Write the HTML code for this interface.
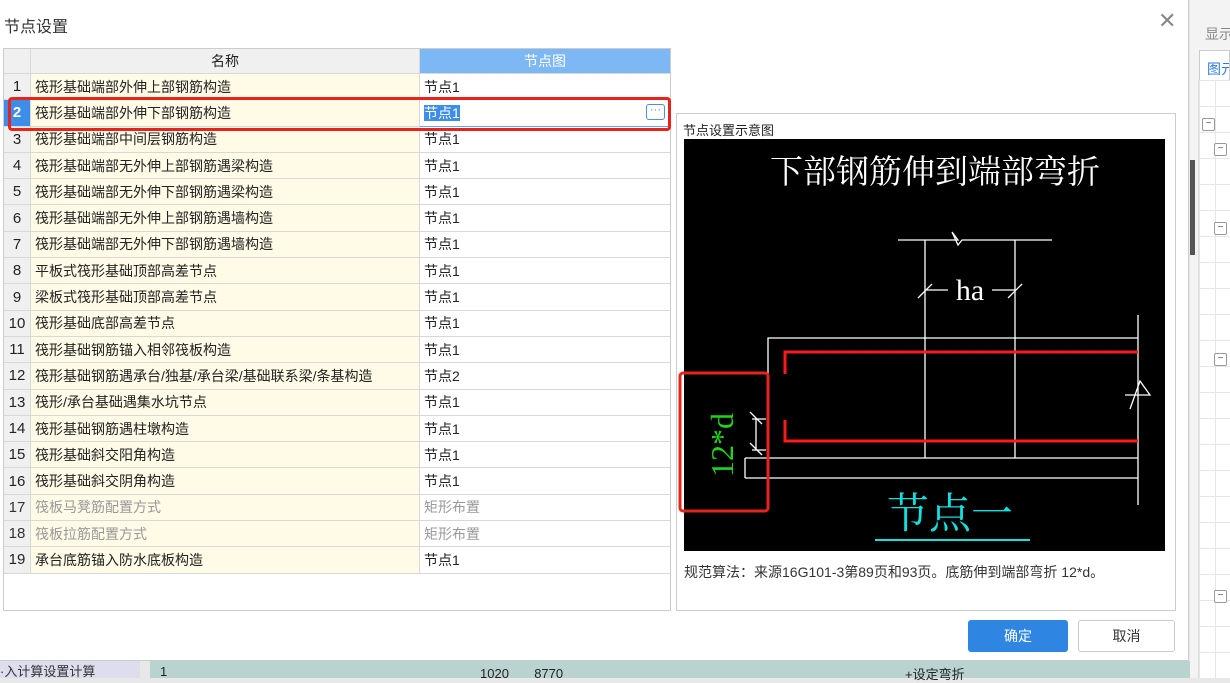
<!DOCTYPE html>
<html><head><meta charset="utf-8"><style>
*{margin:0;padding:0;box-sizing:border-box}
body{width:1230px;height:678px;overflow:hidden;position:relative;background:#e8e8e8;font-family:"Liberation Sans","Noto Sans CJK SC",sans-serif;font-size:14px;color:#222}
.abs{position:absolute}
#dlg{left:0;top:0;width:1189px;height:661px;background:#fff;border-right:1px solid #ccc;border-bottom:1px solid #ccc}
table{border-collapse:collapse;position:absolute;left:3px;top:48px;table-layout:fixed}
td,th{border:1px solid #d8d8d8;height:26.3px;font-weight:normal;white-space:nowrap;overflow:hidden;padding:0 4px}
th{height:25px;background:#f0f0f0;text-align:center;font-size:14px}
th.b{background:#7db8f5;color:#fff}
td.n{background:#f0f0f0;text-align:center;padding:0;font-size:15px}
td.y{background:#fffbe6}
tr.g td{color:#999}
tr.g td.n{color:#333}
.clip{overflow:hidden;white-space:nowrap}
.mb{position:absolute;width:13px;height:13px;border:1px solid #999;border-radius:2px;background:#fff;font-size:10px;line-height:10px;text-align:center;color:#555}
</style></head><body>
<div class="abs" style="left:1190px;top:0;width:40px;height:678px;background:#f3f3f3"></div>
<div class="abs" style="left:1198px;top:80px;width:32px;height:598px;background:#fff;border-left:1px solid #ddd;background-image:linear-gradient(#e6e6e6 1px,transparent 1px),linear-gradient(90deg,#e6e6e6 1px,transparent 1px);background-size:100% 26px,16px 100%"></div>
<div class="abs clip" style="left:1205px;top:24px;width:25px;font-size:14px;color:#888">显示</div>
<div class="abs clip" style="left:1199px;top:50px;width:31px;height:30px;border:1px solid #ccc;border-bottom:none;background:#fff;font-size:14px;color:#2a7ae2;padding:8px 0 0 7px">图元</div>
<div class="mb" style="left:1202px;top:118px">−</div>
<div class="mb" style="left:1214px;top:143px">−</div>
<div class="mb" style="left:1214px;top:222px">−</div>
<div class="mb" style="left:1214px;top:353px">−</div>
<div class="mb" style="left:1214px;top:590px">−</div>
<div class="abs" style="left:1190px;top:160px;width:5px;height:95px;background:#555"></div>
<div class="abs clip" style="left:0;top:661px;width:140px;height:17px;background:#dde;color:#333;font-size:13px">·入计算设置计算</div>
<div class="abs" style="left:150px;top:661px;width:1040px;height:17px;background:#b8d3d0"></div>
<div class="abs" style="left:160px;top:664px;font-size:13px">1</div>
<div class="abs" style="left:480px;top:666px;font-size:13px">1020 &nbsp;&nbsp;&nbsp;&nbsp;&nbsp; 8770</div>
<div class="abs" style="left:905px;top:664px;font-size:13px">+设定弯折</div>
<div id="dlg" class="abs">
<div class="abs" style="left:4px;top:13px;font-size:16px;color:#333">节点设置</div>
<div class="abs" style="left:1158px;top:8px;font-size:22px;color:#888">✕</div>
<table>
<colgroup><col style="width:27px"><col style="width:389px"><col style="width:251px"></colgroup>
<tr><th></th><th>名称</th><th class="b">节点图</th></tr>
<tr><td class="n">1</td><td class="y">筏形基础端部外伸上部钢筋构造</td><td>节点1</td></tr>
<tr><td class="n" style="background:#3d8ee8;color:#fff;font-weight:bold">2</td><td class="y">筏形基础端部外伸下部钢筋构造</td><td style="position:relative;border:1px solid #6aa6e8"><span style="background:#3d8ee8;color:#fff">节点1</span><span style="position:absolute;right:5px;top:4px;width:19px;height:16px;border:1px solid #4a90e2;border-radius:3px;font-size:11px;line-height:10px;text-align:center;color:#4a90e2">···</span></td></tr>
<tr><td class="n">3</td><td class="y">筏形基础端部中间层钢筋构造</td><td>节点1</td></tr>
<tr><td class="n">4</td><td class="y">筏形基础端部无外伸上部钢筋遇梁构造</td><td>节点1</td></tr>
<tr><td class="n">5</td><td class="y">筏形基础端部无外伸下部钢筋遇梁构造</td><td>节点1</td></tr>
<tr><td class="n">6</td><td class="y">筏形基础端部无外伸上部钢筋遇墙构造</td><td>节点1</td></tr>
<tr><td class="n">7</td><td class="y">筏形基础端部无外伸下部钢筋遇墙构造</td><td>节点1</td></tr>
<tr><td class="n">8</td><td class="y">平板式筏形基础顶部高差节点</td><td>节点1</td></tr>
<tr><td class="n">9</td><td class="y">梁板式筏形基础顶部高差节点</td><td>节点1</td></tr>
<tr><td class="n">10</td><td class="y">筏形基础底部高差节点</td><td>节点1</td></tr>
<tr><td class="n">11</td><td class="y">筏形基础钢筋锚入相邻筏板构造</td><td>节点1</td></tr>
<tr><td class="n">12</td><td class="y">筏形基础钢筋遇承台/独基/承台梁/基础联系梁/条基构造</td><td>节点2</td></tr>
<tr><td class="n">13</td><td class="y">筏形/承台基础遇集水坑节点</td><td>节点1</td></tr>
<tr><td class="n">14</td><td class="y">筏形基础钢筋遇柱墩构造</td><td>节点1</td></tr>
<tr><td class="n">15</td><td class="y">筏形基础斜交阳角构造</td><td>节点1</td></tr>
<tr><td class="n">16</td><td class="y">筏形基础斜交阴角构造</td><td>节点1</td></tr>
<tr class="g"><td class="n">17</td><td class="y">筏板马凳筋配置方式</td><td>矩形布置</td></tr>
<tr class="g"><td class="n">18</td><td class="y">筏板拉筋配置方式</td><td>矩形布置</td></tr>
<tr><td class="n">19</td><td class="y">承台底筋锚入防水底板构造</td><td>节点1</td></tr>
</table>
<div class="abs" style="left:3px;top:48px;width:668px;height:563px;border:1px solid #ccc;pointer-events:none"></div>
<div class="abs" style="left:8px;top:97px;width:663px;height:34px;border:3px solid #e8231b;border-radius:4px"></div>
<div class="abs" style="left:676px;top:113px;width:500px;height:498px;border:1px solid #ccc"></div>
<div class="abs" style="left:683px;top:120px;font-size:13px;color:#222">节点设置示意图</div>
<svg class="abs" style="left:0;top:0" width="1189" height="661">
<rect x="684" y="139" width="481" height="412" fill="#000"/>
<text x="935" y="183" fill="#fff" font-size="33" text-anchor="middle" font-family="Liberation Serif,Noto Serif CJK SC,serif">下部钢筋伸到端部弯折</text>
<g stroke="#fff" stroke-width="1.3" fill="none">
<path d="M898 240H958l-6 -8 6 13 4-5H1052"/>
<path d="M925 240V458M1015 240V458"/>
<path d="M925 290H948M992 290H1015M918 298l14-14M1008 298l14-14"/>
<path d="M768 458V338H1138M1138 315V505"/>
<path d="M745 458H1138M745 478H1138M745 458V478"/>
<path d="M1125 395H1150l-10-14 -10 28"/>
<path d="M752 419H766M752 450H766M756 419V450M750 412l12 12M750 443l12 12"/>
</g>
<g stroke="#ff1a1a" stroke-width="3" fill="none">
<path d="M785 374V352H1138M785 420V441H1138"/>
</g>
<text transform="translate(733 445) rotate(-90)" fill="#1fd21f" font-size="32" text-anchor="middle" font-family="Liberation Serif,serif">12*d</text>
<text x="970" y="300" fill="#fff" font-size="30" text-anchor="middle" font-family="Liberation Serif,serif">ha</text>
<text x="950" y="528" fill="#10e0e0" font-size="42" text-anchor="middle" font-family="Liberation Serif,Noto Serif CJK SC,serif">节点一</text>
<path d="M875 540H1030" stroke="#10e0e0" stroke-width="2"/>
<rect x="680" y="373" width="88" height="138" rx="3" fill="none" stroke="#e8231b" stroke-width="3"/>
</svg>
<div class="abs" style="left:684px;top:562px;font-size:14px;color:#333">规范算法：来源16G101-3第89页和93页。底筋伸到端部弯折 12*d。</div>
<div class="abs" style="left:968px;top:620px;width:100px;height:32px;background:#2f86e2;border-radius:3px;color:#fff;text-align:center;line-height:32px;font-size:14px">确定</div>
<div class="abs" style="left:1078px;top:620px;width:97px;height:32px;background:#fff;border:1px solid #ccc;border-radius:3px;color:#333;text-align:center;line-height:30px;font-size:14px">取消</div>
</div>
</body></html>
